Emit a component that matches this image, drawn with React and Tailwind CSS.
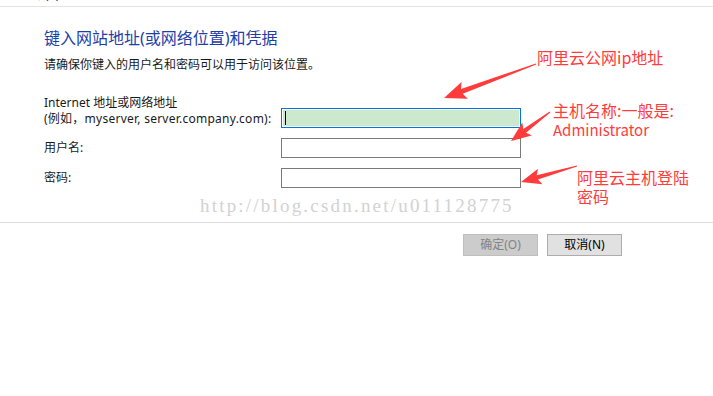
import React from 'react'

// tapered screenshot-tool arrow, drawn from tail to tip
const arrowPoints = (x1, y1, x2, y2, L = 17, W = 8, w = 4.5, t = 1) => {
  const dx = x2 - x1
  const dy = y2 - y1
  const len = Math.hypot(dx, dy)
  const ux = dx / len
  const uy = dy / len
  const nx = -uy
  const ny = ux
  const bx = x2 - ux * L
  const by = y2 - uy * L
  const pts = [
    [x1 + nx * t / 2, y1 + ny * t / 2],
    [bx + nx * w / 2, by + ny * w / 2],
    [bx + nx * W - ux * 3, by + ny * W - uy * 3],
    [x2, y2],
    [bx - nx * W - ux * 3, by - ny * W - uy * 3],
    [bx - nx * w / 2, by - ny * w / 2],
    [x1 - nx * t / 2, y1 - ny * t / 2],
  ]
  return pts.map((p) => p.map((v) => v.toFixed(1)).join(',')).join(' ')
}

const Arrows = () => (
  <svg className="absolute left-0 top-0 pointer-events-none" width="713" height="396">
    <polygon points={arrowPoints(536, 64, 444, 98, 19, 9, 5)} fill="#ff3b3b" />
    <polygon points={arrowPoints(550, 112, 511, 141, 17, 8, 4.5)} fill="#ff3b3b" />
    <polygon points={arrowPoints(577, 166, 521, 182, 17, 8, 4.5)} fill="#ff3b3b" />
  </svg>
)

const Field = ({ active }) =>
  active ? (
    <div className="w-[240px] h-[20px] border border-[#0078d7] p-[1px] bg-white">
      <div className="h-full bg-[#cce8cf] flex items-center pl-[2px]">
        <div className="w-[1px] h-[14px] bg-black" />
      </div>
    </div>
  ) : (
    <div className="w-[240px] h-[20px] border border-[#7a7a7a] bg-white" />
  )

export default function App() {
  return (
    <div className="relative w-[713px] h-[396px] bg-white overflow-hidden font-['Noto_Sans','Noto_Sans_CJK_SC',sans-serif] text-[#1a1a1a]">
      {/* cut-off caption from the window above */}
      <div className="h-[7px] overflow-hidden border-b border-[#e3e3e3]">
        <div className="pl-[6px] -mt-[13px] text-[12px] leading-[16px] text-[#333]">← 凭据(X)</div>
      </div>

      <div className="pl-[44px]">
        <h1 className="mt-[20px] text-[16px] leading-[22px] text-[#1e3ea8] font-normal">
          键入网站地址(或网络位置)和凭据
        </h1>
        <p className="mt-[8px] text-[12px] leading-[16px]">
          请确保你键入的用户名和密码可以用于访问该位置。
        </p>

        <div className="mt-[22px] flex flex-col gap-[10px] text-[12px]">
          <div className="flex items-end">
            <div className="w-[237px] leading-[16px] pb-[1px]">
              <div>Internet 地址或网络地址</div>
              <div className="tracking-[0.25px]">(例如，myserver, server.company.com):</div>
            </div>
            <Field active />
          </div>
          <div className="flex items-center">
            <div className="w-[237px] leading-[16px]">用户名:</div>
            <Field />
          </div>
          <div className="flex items-center">
            <div className="w-[237px] leading-[16px]">密码:</div>
            <Field />
          </div>
        </div>
      </div>

      <div className="mt-[34px] border-t border-[#dcdcdc] pt-[11px] pr-[91px] flex justify-end gap-[9px] text-[12px]">
        <button className="w-[75px] h-[22px] bg-[#cccccc] border border-[#bfbfbf] text-[#838383] leading-[20px]">
          确定(O)
        </button>
        <button className="w-[75px] h-[22px] bg-[#e1e1e1] border border-[#adadad] text-black leading-[20px]">
          取消(N)
        </button>
      </div>

      {/* blog watermark */}
      <div className="absolute left-[200px] top-[195px] font-['Liberation_Serif',serif] text-[19px] leading-[22px] tracking-[2.2px] text-[#d2d2d2]">
        http://blog.csdn.net/u011128775
      </div>

      {/* red annotations */}
      <div className="absolute inset-0 text-[#ff3b3b] text-[16px] leading-[19px] font-['Noto_Sans_CJK_SC',sans-serif]">
        <div className="absolute left-[537px] top-[48px]">阿里云公网ip地址</div>
        <div className="absolute left-[553px] top-[101px]">
          <div>主机名称:一般是:</div>
          <div className="text-[15px]">Administrator</div>
        </div>
        <div className="absolute left-[577px] top-[168px]">
          <div>阿里云主机登陆</div>
          <div>密码</div>
        </div>
      </div>

      <Arrows />
    </div>
  )
}
